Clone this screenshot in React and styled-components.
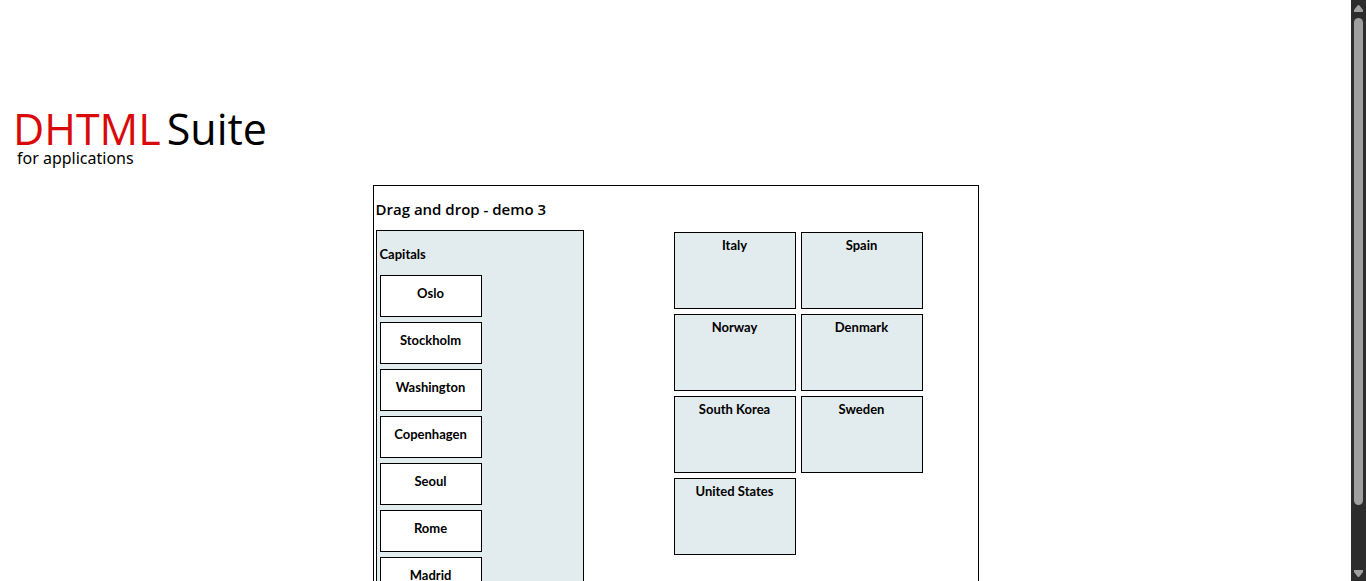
import React from "react";
import styled, { createGlobalStyle } from "styled-components";

const capitals = ["Oslo", "Stockholm", "Washington", "Copenhagen", "Seoul", "Rome", "Madrid"];
const countries = ["Italy", "Spain", "Norway", "Denmark", "South Korea", "Sweden", "United States"];

const GlobalStyle = createGlobalStyle`
  *, *::before, *::after { box-sizing: border-box; }
  body {
    margin: 0;
    background: #fff;
    color: #000;
    font-family: "Trebuchet MS", Lato, sans-serif;
    font-size: 13px;
    font-weight: 700;
    line-height: 16px;
  }
`;

const Shell = styled.div`
  display: grid;
  grid-template-columns: minmax(0, 1fr) 15px;
  height: 100vh;
  overflow: hidden;
`;

const Page = styled.div`
  padding: 108px 0 0;
  overflow: hidden;
`;

const Logo = styled.header`
  height: 77px;
  padding-left: 13px;
  font-family: "Open Sans", sans-serif;
  font-weight: 400;
`;

const Brand = styled.div`
  display: flex;
  gap: 6px;
  font-size: 43px;
  line-height: 42px;
`;

const BrandName = styled.span`
  color: ${(p) => p.$color};
`;

const Tagline = styled.div`
  padding-left: 4px;
  font-family: "Noto Sans", sans-serif;
  font-size: 16px;
  line-height: 16px;
`;

const Panel = styled.main`
  max-width: 606px;
  margin: 0 auto;
  padding: 15px 2px 2px;
  border: 1px solid #000;
`;

const Title = styled.h1`
  margin: 0 0 13px;
  font-family: "Trebuchet MS", "Open Sans", sans-serif;
  font-size: 15px;
  font-weight: 600;
  line-height: 16px;
`;

const Columns = styled.div`
  display: flex;
  align-items: flex-start;
  gap: 90px;
`;

const CapitalBox = styled.section`
  width: 208px;
  padding: 15px 3px 3px;
  border: 1px solid #000;
  background: #e2ebed;
`;

const BoxTitle = styled.h2`
  margin: 0 0 13px;
  font-size: 13px;
  font-weight: 700;
  line-height: 16px;
`;

const List = styled.ul`
  display: flex;
  flex-direction: column;
  gap: 5px;
  margin: 0;
  padding: 0;
  list-style: none;
`;

const Capital = styled.li`
  width: 102px;
  height: 42px;
  padding-top: 9px;
  border: 1px solid #000;
  background: #fff;
  text-align: center;
  cursor: pointer;
`;

const CountryGrid = styled.ul`
  display: grid;
  grid-template-columns: repeat(2, 122px);
  gap: 5px;
  margin: 2px 0 0;
  padding: 0;
  list-style: none;
`;

const Country = styled.li`
  height: 77px;
  padding-top: 4px;
  border: 1px solid #000;
  background: #e2ebed;
  text-align: center;
`;

const ScrollBar = styled.div`
  display: flex;
  flex-direction: column;
  align-items: center;
  padding: 5px 0 4px;
  background: #2c2c2c;
`;

const Track = styled.div`
  flex: 1;
  width: 9px;
  margin: 6px 0 5px;
`;

const Thumb = styled.div`
  height: 89%;
  border-radius: 5px;
  background: #9f9f9f;
`;

const Arrow = ({ down }) => (
  <svg width="9" height="7" viewBox="0 0 9 7" fill="#9f9f9f" aria-hidden="true">
    <path d={down ? "M0 0H9V2L5.5 6.5Q4.5 7.5 3.5 6.5L0 2Z" : "M0 7H9V5L5.5 .5Q4.5 -.5 3.5 .5L0 5Z"} />
  </svg>
);

export default function App() {
  return (
    <>
      <GlobalStyle />
      <Shell>
        <Page>
          <Logo>
            <Brand>
              <BrandName $color="#d90a0a">DHTML</BrandName>
              <BrandName $color="#000">Suite</BrandName>
            </Brand>
            <Tagline>for applications</Tagline>
          </Logo>
          <Panel>
            <Title>Drag and drop - demo 3</Title>
            <Columns>
              <CapitalBox>
                <BoxTitle>Capitals</BoxTitle>
                <List>
                  {capitals.map((name) => (
                    <Capital key={name} draggable>{name}</Capital>
                  ))}
                </List>
              </CapitalBox>
              <CountryGrid>
                {countries.map((name) => (
                  <Country key={name}>{name}</Country>
                ))}
              </CountryGrid>
            </Columns>
          </Panel>
        </Page>
        <ScrollBar aria-hidden="true">
          <Arrow />
          <Track>
            <Thumb />
          </Track>
          <Arrow down />
        </ScrollBar>
      </Shell>
    </>
  );
}
